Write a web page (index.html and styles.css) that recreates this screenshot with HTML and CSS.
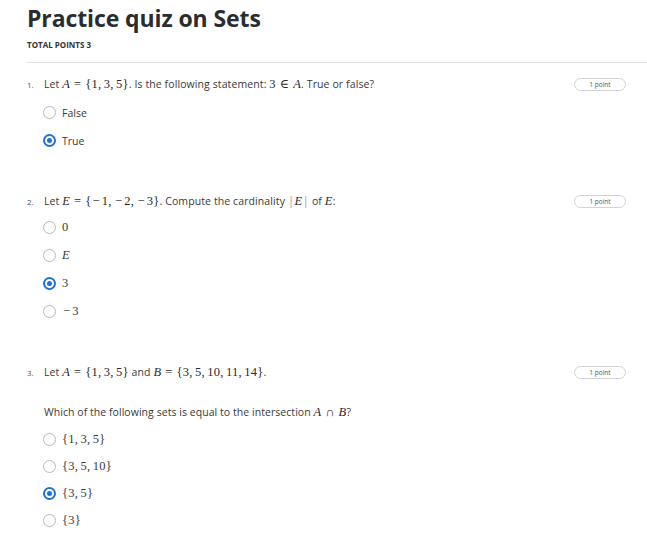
FILE: index.html
```html
<!DOCTYPE html>
<html>
<head>
<meta charset="utf-8">
<link rel="stylesheet" href="styles.css">
</head>
<body>
<div class="page">
  <h1 class="title">Practice quiz on Sets</h1>
  <div class="total">TOTAL POINTS 3</div>
  <hr class="sep">

  <div class="q q1">
    <div class="qhead">
      <span class="num">1.</span>
      <div class="qtext">Let <span class="m"><i>A</i><b class="op">=</b>{1,<s class="c"></s>3,<s class="c"></s>5}</span>. Is the following statement: <span class="m">3<b class="op">∈</b><i>A</i></span>. True or false?</div>
      <span class="badge">1 point</span>
    </div>
    <div class="opts">
      <div class="opt"><span class="radio"></span><span class="lbl">False</span></div>
      <div class="opt"><span class="radio on"></span><span class="lbl">True</span></div>
    </div>
  </div>

  <div class="q q2">
    <div class="qhead">
      <span class="num">2.</span>
      <div class="qtext">Let <span class="m"><i>E</i><b class="op">=</b>{<b class="neg">−</b>1,<s class="c"></s><b class="neg">−</b>2,<s class="c"></s><b class="neg">−</b>3}</span>. Compute the cardinality <span class="m"><b class="bar">|</b><i>E</i><b class="bar">|</b></span> of <span class="m"><i>E</i></span>:</div>
      <span class="badge">1 point</span>
    </div>
    <div class="opts">
      <div class="opt"><span class="radio"></span><span class="lbl m">0</span></div>
      <div class="opt"><span class="radio"></span><span class="lbl m"><i>E</i></span></div>
      <div class="opt"><span class="radio on"></span><span class="lbl m">3</span></div>
      <div class="opt"><span class="radio"></span><span class="lbl m"><b class="neg">−</b>3</span></div>
    </div>
  </div>

  <div class="q q3">
    <div class="qhead">
      <span class="num">3.</span>
      <div class="qtext">Let <span class="m"><i>A</i><b class="op">=</b>{1,<s class="c"></s>3,<s class="c"></s>5}</span> and <span class="m"><i>B</i><b class="op">=</b>{3,<s class="c"></s>5,<s class="c"></s>10,<s class="c"></s>11,<s class="c"></s>14}</span>.</div>
      <span class="badge">1 point</span>
    </div>
    <p class="sub">Which of the following sets is equal to the intersection <span class="m"><i>A</i><b class="op">∩</b><i>B</i></span>?</p>
    <div class="opts">
      <div class="opt"><span class="radio"></span><span class="lbl m">{1,<s class="c"></s>3,<s class="c"></s>5}</span></div>
      <div class="opt"><span class="radio"></span><span class="lbl m">{3,<s class="c"></s>5,<s class="c"></s>10}</span></div>
      <div class="opt"><span class="radio on"></span><span class="lbl m">{3,<s class="c"></s>5}</span></div>
      <div class="opt"><span class="radio"></span><span class="lbl m">{3}</span></div>
    </div>
  </div>
</div>
</body>
</html>
```
FILE: styles.css
```css
* { box-sizing: border-box; }
html, body { margin: 0; padding: 0; background: #fff; }
body { font-family: "Open Sans", "Noto Sans", sans-serif; color: #373a3c; }
.page { padding: 0 0 0 27px; }
.title {
  margin: 0;
  padding-top: 3px;
  font-size: 23px;
  line-height: 30px;
  font-weight: 700;
  color: #2a2d30;
  letter-spacing: -0.1px;
}
.total {
  margin-top: 7px;
  font-size: 8px;
  font-weight: 700;
  color: #333;
  line-height: 10px;
}
.sep {
  margin: 12px 0 0 0;
  border: 0;
  border-top: 1px solid #e2e2e2;
  height: 0;
}
.q { padding-right: 21px; }
.qhead { display: flex; align-items: center; height: 16px; }
.q1 { margin-top: 13px; }
.q2 { margin-top: 46px; }
.q3 { margin-top: 46px; }
.num { width: 17px; font-size: 8px; color: #555; flex: none; }
.qtext { flex: 1; font-size: 10.5px; color: #3a3a3a; white-space: nowrap; letter-spacing: 0.1px; }
.m { font-family: "Liberation Serif", "DejaVu Serif", serif; font-size: 12.5px; color: #2a2a2a; letter-spacing: 0.2px; }
.m i { font-style: italic; }
.op { font-weight: 400; margin: 0 4px; }
.neg { font-weight: 400; margin: 0 2px 0 1px; }
.bar { font-weight: 400; margin: 0 2px; color: #888; }
.c { display: inline-block; width: 2.5px; text-decoration: none; }
.badge {
  flex: none;
  width: 52px;
  height: 13px;
  border: 1px solid #d3d3d3;
  border-radius: 7px;
  font-size: 6.5px;
  color: #555;
  display: flex;
  align-items: center;
  justify-content: center;
}
.opts { display: flex; flex-direction: column; gap: 15px; margin-top: 12px; padding-left: 16px; }
.q1 .opts { margin-top: 14px; }
.sub { margin: 24px 0 0 0; padding-left: 17px; font-size: 10.5px; color: #3a3a3a; line-height: 16px; letter-spacing: 0.05px; }
.q3 .opts { margin-top: 13px; gap: 14px; }
.opt { display: flex; align-items: center; height: 13px; gap: 6px; }
.radio {
  width: 13px; height: 13px; border-radius: 50%;
  border: 1.5px solid #b8b8b8;
  flex: none;
  position: relative;
}
.radio.on { border: 2px solid #1f73d8; }
.radio.on::after {
  content: "";
  position: absolute; left: 2px; top: 2px;
  width: 5px; height: 5px; border-radius: 50%;
  background: #1f73d8;
}
.lbl { font-size: 10.5px; color: #3a3a3a; }
.lbl.m { font-size: 12.5px; }
```
